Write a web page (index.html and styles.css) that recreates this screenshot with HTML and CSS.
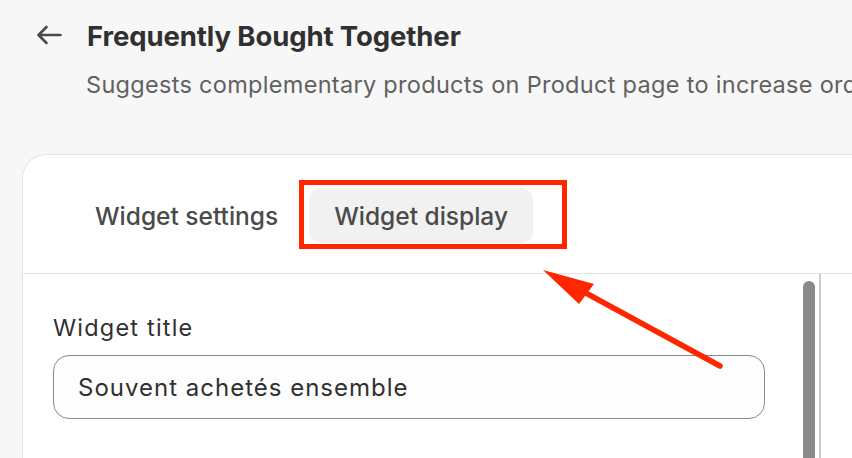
FILE: index.html
```html
<!DOCTYPE html>
<html lang="en">
<head>
<meta charset="utf-8">
<title>Frequently Bought Together</title>
<link rel="stylesheet" href="styles.css">
</head>
<body>
<div class="page">
  <header class="page-header">
    <button class="back" aria-label="Back">
      <svg width="26" height="20" viewBox="0 0 26 20" fill="none" stroke="#4a4a4a" stroke-width="2.6" stroke-linecap="round" stroke-linejoin="round">
        <path d="M24.5 10H2.5M10.5 2L2.5 10l8 8"/>
      </svg>
    </button>
    <div class="titles">
      <h1 class="title">Frequently Bought Together</h1>
      <p class="subtitle">Suggests complementary products on Product page to increase order value</p>
    </div>
  </header>

  <section class="card">
    <nav class="tabs">
      <button class="tab">Widget settings</button>
      <button class="tab tab-active">Widget display</button>
    </nav>
    <div class="card-body">
      <div class="panel">
        <div class="panel-content">
          <label class="field-label" for="wt">Widget title</label>
          <div class="input" id="wt">Souvent achetés ensemble</div>
        </div>
        <div class="scroll-track"><div class="scroll-thumb"></div></div>
      </div>
      <div class="preview"></div>
    </div>
  </section>
</div>

<div class="highlight-box"></div>
<svg class="annotation-arrow" width="852" height="458" viewBox="0 0 852 458">
  <line x1="720" y1="366" x2="584" y2="292" stroke="#ff2600" stroke-width="5.5" stroke-linecap="round"/>
  <polygon points="543,270 594,284 579,304" fill="#ff2600"/>
</svg>
</body>
</html>
```

FILE: styles.css
```css
* { box-sizing: border-box; }

html, body {
  margin: 0;
  padding: 0;
  width: 852px;
  height: 458px;
  overflow: hidden;
  background: #f7f7f7;
  font-family: Inter, "Noto Sans", "Liberation Sans", sans-serif;
  color: #303030;
}

.page {
  padding-top: 20px;
}

.page-header {
  display: flex;
  align-items: flex-start;
  padding-left: 36px;
  height: 134px;
}

.back {
  border: 0;
  background: none;
  padding: 0;
  margin: 5px 25px 0 0;
  width: 26px;
  height: 20px;
  display: flex;
}

.titles {
  white-space: nowrap;
}

.title {
  margin: 0;
  font-size: 27.5px;
  line-height: 32px;
  font-weight: 700;
  color: #303030;
  letter-spacing: -0.1px;
}

.subtitle {
  margin: 19px 0 0 -1px;
  font-size: 23.5px;
  line-height: 28px;
  color: #616161;
  letter-spacing: 0.3px;
}

.card {
  margin-left: 22px;
  width: 900px;
  height: 340px;
  background: #ffffff;
  border: 1px solid #e3e3e3;
  border-right: 0;
  border-radius: 24px 0 0 0;
}

.tabs {
  display: flex;
  gap: 6px;
  padding: 33px 0 0 47px;
  height: 119px;
  border-bottom: 1px solid #e3e3e3;
}

.tab {
  font-family: inherit;
  font-size: 24.5px;
  font-weight: 500;
  color: #4a4a4a;
  background: transparent;
  border: 0;
  border-radius: 12px;
  height: 55px;
  padding: 0 25px;
  cursor: pointer;
}

.tab-active {
  background: #f1f1f1;
}

.card-body {
  display: flex;
  height: 220px;
}

.panel {
  display: flex;
  width: 798px;
  border-right: 2px solid #c9cbce;
}

.panel-content {
  flex: 1;
  padding: 40px 38px 0 30px;
}

.field-label {
  display: block;
  font-size: 23.5px;
  line-height: 28px;
  color: #303030;
  letter-spacing: 1.2px;
}

.input {
  margin-top: 13px;
  height: 64px;
  border: 1px solid #8a8a8a;
  border-radius: 16px;
  background: #fdfdfd;
  padding: 0 24px;
  display: flex;
  align-items: center;
  font-size: 24px;
  letter-spacing: 1px;
  color: #303030;
}

.scroll-track {
  width: 16px;
  padding: 7px 4px 0 0;
}

.scroll-thumb {
  width: 12px;
  height: 400px;
  background: #8a8a8a;
  border-radius: 6px;
}

.preview {
  flex: 1;
}

.highlight-box {
  position: absolute;
  left: 299px;
  top: 180px;
  width: 268px;
  height: 69px;
  border: 5px solid #ff2600;
  pointer-events: none;
}

.annotation-arrow {
  position: absolute;
  left: 0;
  top: 0;
  pointer-events: none;
}
```
